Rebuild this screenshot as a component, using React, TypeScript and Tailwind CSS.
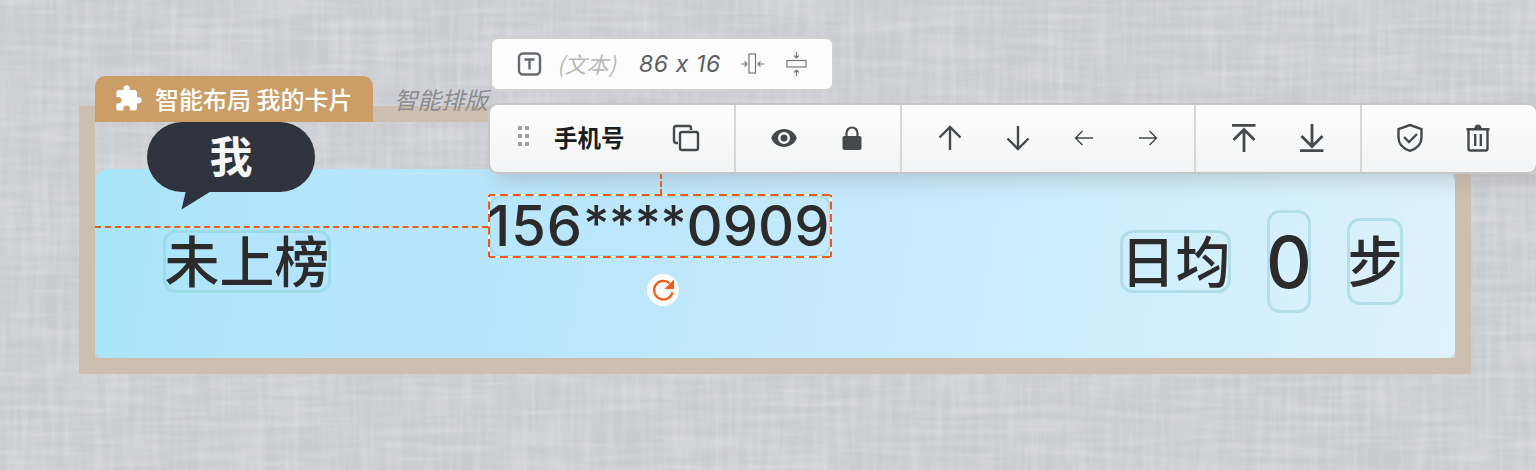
import type { ReactNode } from "react";

const ink = "#45494c";

function LinenTexture() {
  return (
    <svg className="absolute inset-0" width="1536" height="470" aria-hidden="true">
      <defs>
        <filter id="weft" x="0" y="0" width="100%" height="100%">
          <feTurbulence type="fractalNoise" baseFrequency="0.012 0.14" numOctaves={2} seed={4} />
          <feColorMatrix values="0 0 0 0 1  0 0 0 0 1  0 0 0 0 1  0.38 0 0 0 -0.14" />
        </filter>
        <filter id="warp" x="0" y="0" width="100%" height="100%">
          <feTurbulence type="fractalNoise" baseFrequency="0.14 0.012" numOctaves={2} seed={9} />
          <feColorMatrix values="0 0 0 0 1  0 0 0 0 1  0 0 0 0 1  0.38 0 0 0 -0.14" />
        </filter>
      </defs>
      <rect width="1536" height="470" filter="url(#weft)" />
      <rect width="1536" height="470" filter="url(#warp)" />
    </svg>
  );
}

function Icon({ size = 30, width = 2.4, color = ink, children }: { size?: number; width?: number; color?: string; children: ReactNode }) {
  return (
    <svg width={size} height={size} viewBox={`0 0 ${size} ${size}`} fill="none" stroke={color} strokeWidth={width} className="block shrink-0">
      {children}
    </svg>
  );
}

function ToolGroup({ children, last = false }: { children: ReactNode; last?: boolean }) {
  return (
    <div className={`flex h-full shrink-0 items-center gap-[38px] pb-px pl-[33px] ${last ? "pr-[42px]" : "border-r-2 border-[#d7d7d8] pr-[33px]"}`}>
      {children}
    </div>
  );
}

function Toolbar() {
  return (
    <div className="absolute left-[488px] top-[103px] flex h-[71px] w-[1050px] items-center overflow-hidden rounded-[10px] border-2 border-[#c9c7c5] bg-linear-to-b from-[#fdfdfd] to-[#f3f4f5]">
      <div className="flex h-full w-[246px] shrink-0 items-center border-r-2 border-[#d7d7d8] pl-7">
        <svg width="12" height="22" viewBox="0 0 12 22" fill="#a09f9e" className="mb-[5px] shrink-0">
          <path d="M0 1h4v4H0zM7 1h4v4H7zM0 9h4v4H0zM7 9h4v4H7zM0 17h4v4H0zM7 17h4v4H7z" />
        </svg>
        <span className="mb-1 ml-6 w-[72px] whitespace-nowrap text-[23.5px] leading-8 font-bold text-[#1c1d1e]">手机号</span>
        <div className="mb-px ml-[45px]">
          <Icon>
            <path d="M7 20H5a2 2 0 0 1-2-2V5a2 2 0 0 1 2-2h13a2 2 0 0 1 2 2v2" />
            <rect x="9" y="9" width="18" height="18" rx="2" />
          </Icon>
        </div>
      </div>
      <ToolGroup>
        <Icon>
          <path fill={ink} stroke="none" fillRule="evenodd" d="M15 6C9 6 4.200 9.500 2.200 15 4.200 20.500 9 24 15 24s10.800-3.500 12.800-9C25.800 9.500 21 6 15 6Zm0 3a6 6 0 1 1 0 12 6 6 0 0 1 0-12Zm0 2.500a3.500 3.500 0 1 0 0 7 3.500 3.500 0 0 0 0-7Z" />
        </Icon>
        <Icon>
          <rect x="5.500" y="13" width="19" height="14" rx="2" fill={ink} stroke="none" />
          <path d="M9.500 14V10a5.500 5.500 0 0 1 11 0v4" strokeWidth={2.200} />
        </Icon>
      </ToolGroup>
      <ToolGroup>
        <Icon><path d="M15 27V4M4.500 14.500 15 4l10.500 10.500" /></Icon>
        <Icon><path d="M15 3v23M4.500 15.500 15 26l10.500-10.500" /></Icon>
        <Icon size={26} width={1.500}><path d="M22 13H4.500M11.500 6l-7 7 7 7" /></Icon>
        <Icon size={26} width={1.500}><path d="M4 13h17.500M14.500 6l7 7-7 7" /></Icon>
      </ToolGroup>
      <ToolGroup>
        <Icon width={2.800}><path d="M3 2.400h23.500M15 29V7M4.500 17 15 6.500 25.500 17" /></Icon>
        <Icon width={2.800}><path d="M3 27.600h23.500M15 1v22M4.500 13 15 23.500 25.500 13" /></Icon>
      </ToolGroup>
      <ToolGroup last>
        <Icon><path d="m15 2 11.500 4v8.500c0 6.500-4.500 11-11.500 13.300C8 25.500 3.500 21 3.500 14.500V6L15 2ZM9 14l5 5 8-8" /></Icon>
        <Icon>
          <path d="M3.500 6.300h23M5.500 6v19.500a2 2 0 0 0 2 2h15a2 2 0 0 0 2-2V6" />
          <path d="M12.200 11v12M17.800 11v12" />
          <path d="M11.500 5.500c0-3 1.500-4 3.500-4s3.500 1 3.500 4Z" fill={ink} stroke="none" />
        </Icon>
      </ToolGroup>
    </div>
  );
}

function SizePanel() {
  return (
    <div className="absolute left-[490px] top-[37px] flex h-[54px] w-[344px] items-center rounded-lg border-2 border-[#d2d1d1] bg-[#fcfcfc] pl-[25px]">
      <Icon size={26} width={2.400} color="#646a70">
        <rect x="2" y="2.500" width="21" height="21" rx="4" />
        <path d="M7.500 8.500h10M12.500 8.500v10" />
      </Icon>
      <span className="mb-[3px] ml-3.5 w-[78px] whitespace-nowrap text-[22px] leading-8 italic text-[#b9b9b7]">(文本)</span>
      <span className="ml-1 w-[88px] whitespace-nowrap font-['Inter','Liberation_Sans',sans-serif] text-[23px] leading-8 italic tracking-[0.6px] text-[#5b5f63]">86 x 16</span>
      <svg width="24" height="24" viewBox="0 0 24 24" fill="none" stroke="#74777a" strokeWidth="1.200" className="ml-[13px] shrink-0">
        <rect x="9" y="2" width="6.500" height="19" />
        <path d="M1 12h6M4.500 9.500 7 12l-2.500 2.500M24 12h-6M20.500 9.500 18 12l2.500 2.500" />
      </svg>
      <svg width="24" height="24" viewBox="0 0 24 24" fill="none" stroke="#74777a" strokeWidth="1.200" className="ml-[21px] shrink-0">
        <rect x="2" y="8.500" width="19" height="6.500" />
        <path d="M11.500 0v6M9 3.500 11.500 6 14 3.500M11.500 24v-6M9 20.500l2.500-2.500 2.500 2.500" />
      </svg>
    </div>
  );
}

export default function App() {
  return (
    <main className="relative h-[470px] w-[1536px] overflow-hidden bg-[#cacbd0] font-['Noto_Sans_CJK_SC',sans-serif]">
      <LinenTexture />

      <section className="absolute left-[79px] top-[106px] h-[268px] w-[1392px] border-16 border-[#ccbfb0] pt-[47px]">
        <div className="h-[189px] w-[1360px] rounded-t-[14px] rounded-b-lg bg-[linear-gradient(100deg,#a8e5f9_0%,#b4e4fc_14%,#b9e6fc_32%,#c5e9fd_54%,#d0effc_78%,#def2fd_100%)]" />
      </section>

      <div className="absolute left-[95px] top-[76px] flex h-[46px] w-[278px] items-center rounded-t-[10px] bg-[#ca9e66] pl-[19px] text-white">
        <svg width="29" height="29" viewBox="0 0 24 24" fill="currentColor" className="mb-0.5 shrink-0">
          <path d="M20.500 11H19V7c0-1.100-.9-2-2-2h-4V3.500a2.500 2.500 0 0 0-5 0V5H4c-1.100 0-2 .9-2 2v3.800h1.500a2.700 2.700 0 0 1 0 5.400H2V20c0 1.100.9 2 2 2h3.800v-1.500a2.700 2.700 0 0 1 5.400 0V22H17c1.100 0 2-.9 2-2v-4h1.500a2.500 2.500 0 0 0 0-5Z" />
        </svg>
        <span className="ml-3 whitespace-nowrap text-2xl leading-8 font-medium">智能布局 我的卡片</span>
      </div>
      <span className="absolute left-[394px] top-[83px] whitespace-nowrap text-[23.500px] leading-8 italic text-[#8b8c8f]">智能排版</span>

      <div className="absolute left-[147px] top-[122px] flex h-[70px] w-[168px] items-center justify-center rounded-full bg-[#2e333d]">
        <svg width="34" height="24" viewBox="0 0 34 24" fill="#2e333d" className="absolute left-[34px] top-[64px]">
          <path d="M6 0 0.500 23.500 32 4V0Z" />
        </svg>
        <span className="mb-1.5 text-[43px] leading-[60px] font-bold text-[#f7f7f7]">我</span>
      </div>

      <div className="absolute left-[163px] top-[230px] flex h-[63px] w-[168px] items-center justify-center rounded-[13px] border-3 border-[#9bdce6]">
        <span className="mb-[7px] whitespace-nowrap text-[55px] leading-[62px] font-medium text-[#2b2b2b]">未上榜</span>
      </div>
      <div className="absolute left-[1120px] top-[230px] flex h-[63px] w-[111px] items-center justify-center rounded-[13px] border-3 border-[#b0dde9]">
        <span className="mb-[7px] whitespace-nowrap text-[55px] leading-[62px] font-medium text-[#2b2b2b]">日均</span>
      </div>
      <div className="absolute left-[1267px] top-[210px] flex h-[103px] w-[44px] items-center justify-center rounded-[13px] border-3 border-[#b4dfea]">
        <span className="font-['Inter','Liberation_Sans',sans-serif] text-[71px] leading-[76px] font-medium text-[#2b2b2b]">0</span>
      </div>
      <div className="absolute left-[1347px] top-[218px] flex h-[87px] w-[56px] items-center justify-center rounded-[13px] border-3 border-[#b4dfea]">
        <span className="mb-[7px] text-[55px] leading-[62px] font-medium text-[#2b2b2b]">步</span>
      </div>

      <div className="absolute left-[500px] top-[150px] h-6 w-[1050px] shadow-[0_2px_22px_3px_#8c8c8c66]" />
      <div className="absolute left-[95px] top-[226px] w-[393px] border-t-2 border-dashed border-[#ef5a14]" />
      <div className="absolute left-[660px] top-[173px] h-[22px] border-l-2 border-dashed border-[#e2602b]" />

      <div className="absolute left-[489px] top-[195px] flex h-[62px] w-[342px] items-center rounded-[13px] border-2 border-[#a3dce7]">
        <p className="mt-0.5 -ml-1 flex items-baseline whitespace-nowrap font-['Inter','Liberation_Sans',sans-serif] text-[56px] leading-[60px] font-medium text-[#2b2b2b]">
          <span className="tracking-[1px]">156</span>
          <span className="-translate-y-[5px] text-[50px] tracking-[-0.200px]">****</span>
          <span className="tracking-[0.100px]">0909</span>
        </p>
      </div>
      <svg width="344" height="64" viewBox="0 0 344 64" fill="none" strokeWidth="2" className="absolute left-[488px] top-[194px]">
        <rect x="1" y="1" width="342" height="62" stroke="#f7f4f0" />
        <path d="M1 1h342M1 63h342" stroke="#ec5a18" strokeDasharray="8 4.880" strokeDashoffset="2" />
        <path d="M1 1v62M343 1v62" stroke="#ec5a18" strokeDasharray="8 4.500" strokeDashoffset="6" />
      </svg>

      <div className="absolute left-[647px] top-[274px] flex h-8 w-8 items-center justify-center rounded-full bg-[#fdfcfb]">
        <svg width="24" height="24" viewBox="0 0 24 24" fill="none" stroke="#f05b15" strokeWidth="2.200">
          <path d="M21.500 14.200A9.300 9.300 0 1 1 18.700 5.300" />
          <path d="M23 1.500v9.500h-9.500Z" fill="#f05b15" stroke="none" />
        </svg>
      </div>

      <Toolbar />
      <SizePanel />
    </main>
  );
}
